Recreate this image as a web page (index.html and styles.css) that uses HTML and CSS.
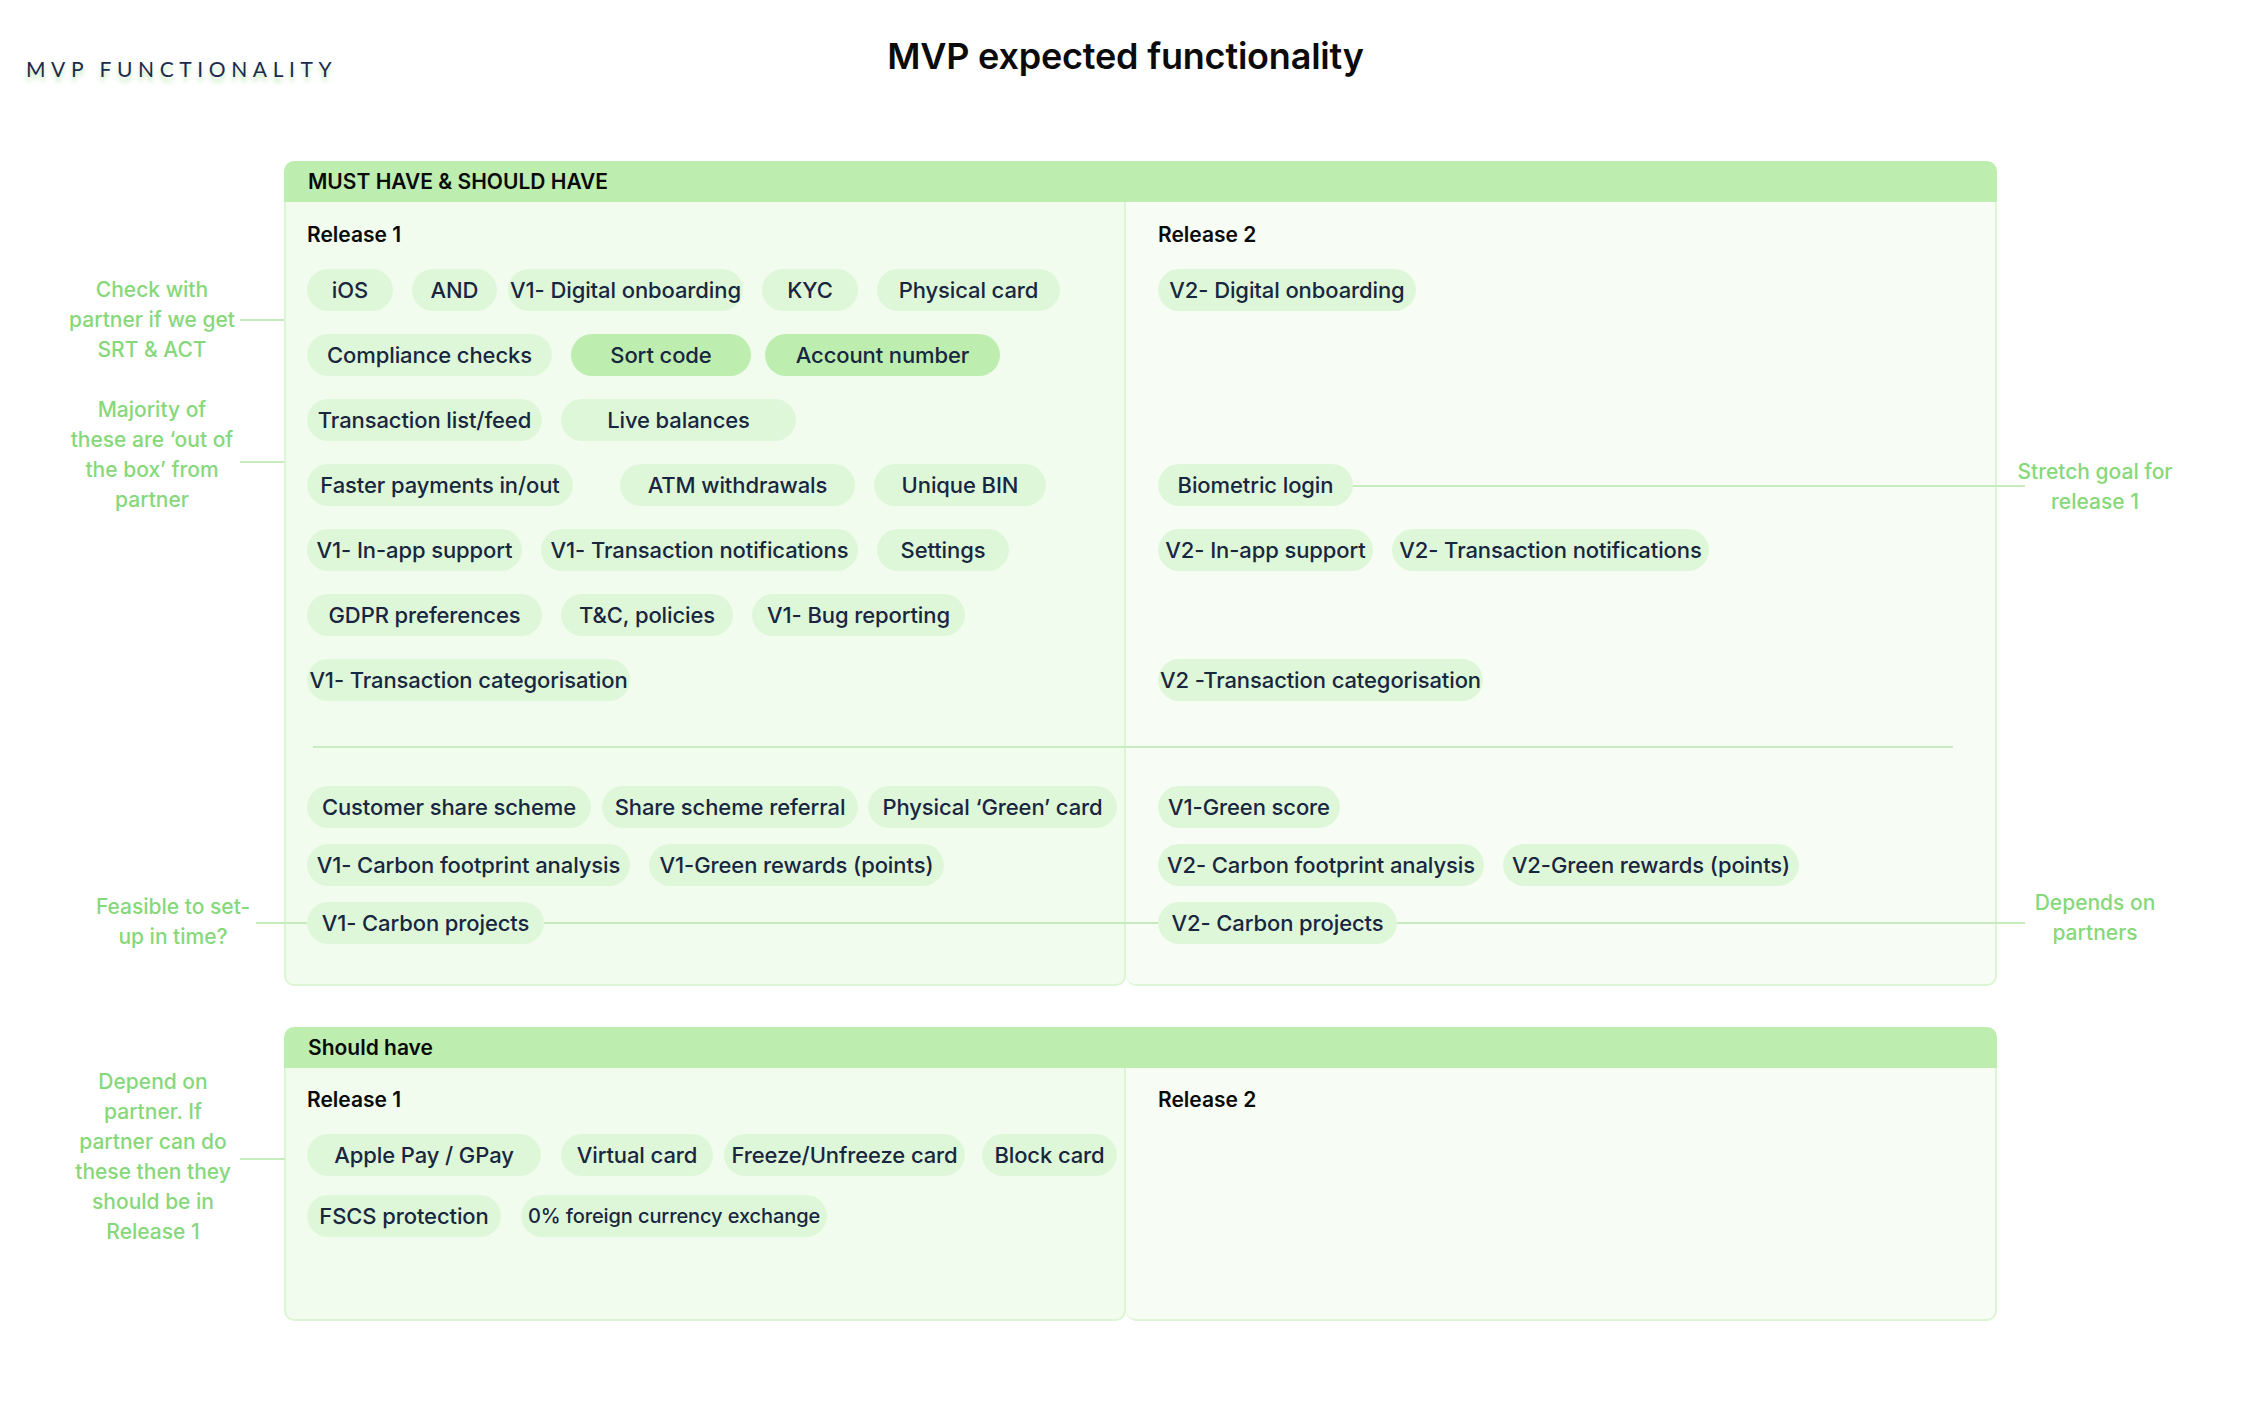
FILE: index.html
```html
<!DOCTYPE html>
<html lang="en">
<head>
<meta charset="utf-8">
<title>MVP expected functionality</title>
<link rel="stylesheet" href="styles.css">
</head>
<body>
<header class="top">
  <div class="label">MVP FUNCTIONALITY</div>
  <h1 class="title">MVP expected functionality</h1>
  <div></div>
</header>

<section class="section s1">
  <div class="box">
    <div class="box-head">MUST HAVE &amp; SHOULD HAVE</div>
    <div class="cols">
      <div class="col col-left">
        <div class="rel">Release 1</div>
        <div class="rows">
          <div class="row">
            <div class="pill" style="width:86px">iOS</div>
            <div class="pill" style="width:85px">AND</div>
            <div class="pill g11" style="width:235px">V1- Digital onboarding</div>
            <div class="pill" style="width:96px">KYC</div>
            <div class="pill" style="width:183px">Physical card</div>
          </div>
          <div class="row">
            <div class="pill" style="width:245px">Compliance checks</div>
            <div class="pill dark" style="width:180px">Sort code</div>
            <div class="pill dark g14" style="width:235px">Account number</div>
          </div>
          <div class="row">
            <div class="pill" style="width:235px">Transaction list/feed</div>
            <div class="pill" style="width:235px">Live balances</div>
          </div>
          <div class="row">
            <div class="pill" style="width:266px">Faster payments in/out</div>
            <div class="pill g47" style="width:235px">ATM withdrawals</div>
            <div class="pill" style="width:172px">Unique BIN</div>
          </div>
          <div class="row">
            <div class="pill" style="width:215px">V1- In-app support</div>
            <div class="pill" style="width:317px">V1- Transaction notifications</div>
            <div class="pill" style="width:132px">Settings</div>
          </div>
          <div class="row">
            <div class="pill" style="width:235px">GDPR preferences</div>
            <div class="pill" style="width:172px">T&amp;C, policies</div>
            <div class="pill" style="width:213px">V1- Bug reporting</div>
          </div>
          <div class="row">
            <div class="pill" style="width:323px">V1- Transaction categorisation</div>
          </div>
        </div>
        <div class="divider"></div>
        <div class="rows rows-low">
          <div class="row">
            <div class="pill" style="width:284px">Customer share scheme</div>
            <div class="pill g11" style="width:256px">Share scheme referral</div>
            <div class="pill g10" style="width:249px">Physical ‘Green’ card</div>
          </div>
          <div class="row">
            <div class="pill" style="width:323px">V1- Carbon footprint analysis</div>
            <div class="pill" style="width:295px">V1-Green rewards (points)</div>
          </div>
          <div class="row">
            <div class="pill" style="width:237px">V1- Carbon projects</div>
          </div>
        </div>
      </div>
      <div class="col col-right">
        <div class="rel">Release 2</div>
        <div class="rows">
          <div class="row">
            <div class="pill" style="width:258px">V2- Digital onboarding</div>
          </div>
          <div class="row"></div>
          <div class="row"></div>
          <div class="row">
            <div class="pill" style="width:195px">Biometric login</div>
          </div>
          <div class="row">
            <div class="pill" style="width:215px">V2- In-app support</div>
            <div class="pill" style="width:317px">V2- Transaction notifications</div>
          </div>
          <div class="row"></div>
          <div class="row">
            <div class="pill" style="width:325px">V2 -Transaction categorisation</div>
          </div>
        </div>
        <div class="divider"></div>
        <div class="rows rows-low">
          <div class="row">
            <div class="pill" style="width:182px">V1-Green score</div>
          </div>
          <div class="row">
            <div class="pill" style="width:326px">V2- Carbon footprint analysis</div>
            <div class="pill" style="width:296px">V2-Green rewards (points)</div>
          </div>
          <div class="row">
            <div class="pill" style="width:239px">V2- Carbon projects</div>
          </div>
        </div>
      </div>
    </div>
  </div>

  <div class="note n-check">Check with<br>partner if we get<br>SRT &amp; ACT</div>
  <div class="note n-majority">Majority of<br>these are ‘out of<br>the box’ from<br>partner</div>
  <div class="note n-feasible">Feasible to set-<br>up in time?</div>
  <div class="note n-stretch">Stretch goal for<br>release 1</div>
  <div class="note n-depends">Depends on<br>partners</div>

  <div class="link l-check"></div>
  <div class="link l-majority"></div>
  <div class="link l-carbon"></div>
  <div class="link l-bio"></div>
</section>

<section class="section s2">
  <div class="box">
    <div class="box-head">Should have</div>
    <div class="cols">
      <div class="col col-left col-short">
        <div class="rel">Release 1</div>
        <div class="rows rows-b2">
          <div class="row">
            <div class="pill" style="width:234px">Apple Pay / GPay</div>
            <div class="pill g20" style="width:152px">Virtual card</div>
            <div class="pill g11" style="width:241px">Freeze/Unfreeze card</div>
            <div class="pill g17" style="width:135px">Block card</div>
          </div>
          <div class="row">
            <div class="pill" style="width:194px">FSCS protection</div>
            <div class="pill small g20" style="width:306px">0% foreign currency exchange</div>
          </div>
        </div>
      </div>
      <div class="col col-right col-short">
        <div class="rel">Release 2</div>
      </div>
    </div>
  </div>

  <div class="note n-depend">Depend on<br>partner. If<br>partner can do<br>these then they<br>should be in<br>Release 1</div>
  <div class="link l-depend"></div>
</section>
</body>
</html>
```

FILE: styles.css
```css
* { box-sizing: border-box; }

html, body {
  margin: 0;
  padding: 0;
  background: #ffffff;
}

body {
  width: 2242px;
  min-height: 1402px;
  font-family: "Inter", "Noto Sans", "Liberation Sans", sans-serif;
  color: #1b2a44;
}

/* ---------- top header ---------- */
.top {
  display: grid;
  grid-template-columns: 1fr auto 1fr;
  align-items: start;
  height: 81px;
  padding-top: 36px;
}

.label {
  margin-top: 20px;
  padding-left: 26px;
  font-family: "Lato", "Liberation Sans", sans-serif;
  font-size: 21px;
  line-height: 25px;
  font-weight: 400;
  letter-spacing: 5.6px;
  color: #1b2b4c;
  text-shadow: 0 5px 4px rgba(134, 216, 122, 0.5);
  white-space: nowrap;
}

.title {
  margin: 0;
  padding-left: 9px;
  font-size: 36px;
  line-height: 40px;
  font-weight: 600;
  color: #0b0b0b;
  letter-spacing: -0.2px;
}

/* ---------- sections ---------- */
.section {
  position: relative;
  padding-left: 284px;
}

.s1 { margin-top: 80px; }
.s2 { margin-top: 41px; }

.box {
  width: 1713px;
}

.box-head {
  height: 41px;
  line-height: 41px;
  padding-left: 24px;
  background: #bdeeb0;
  border-radius: 10px 10px 0 0;
  font-size: 21px;
  font-weight: 600;
  color: #0a0a0a;
}

.cols {
  display: grid;
  grid-template-columns: 842px 871px;
}

.col {
  border: 2px solid #dcf5d4;
  border-top: 0;
  border-radius: 0 0 10px 10px;
  padding-top: 20px;
  padding-bottom: 40px;
}

.col-left {
  background: #f1fcee;
  padding-left: 21px;
}

.col-right {
  background: #f7fdf5;
  border-left: 0;
  padding-left: 32px;
}

.col-short {
  padding-top: 19px;
  padding-bottom: 82px;
}

.rel {
  font-size: 21px;
  line-height: 25px;
  font-weight: 600;
  color: #0a0a0a;
}

.rows {
  display: flex;
  flex-direction: column;
  gap: 23px;
  margin-top: 22px;
}

.rows-low {
  gap: 16px;
  margin-top: 38px;
}

.rows-b2 {
  gap: 19px;
}

.row {
  display: flex;
  height: 42px;
}

.pill {
  position: relative;
  z-index: 1;
  flex: none;
  display: flex;
  align-items: center;
  justify-content: center;
  height: 42px;
  border-radius: 21px;
  background: #dff7d9;
  font-size: 22px;
  font-weight: 500;
  color: #18263f;
  white-space: nowrap;
  letter-spacing: -0.1px;
}

.pill + .pill { margin-left: 19px; }
.pill.g10 { margin-left: 10px; }
.pill.g11 { margin-left: 11px; }
.pill.g14 { margin-left: 14px; }
.pill.g17 { margin-left: 17px; }
.pill.g20 { margin-left: 20px; }
.pill.g47 { margin-left: 47px; }

.pill.dark { background: #bdeeb0; }
.pill.small { font-size: 20px; }

.divider {
  height: 2px;
  margin-top: 45px;
  background: #c8edc0;
}

.col-left .divider { margin-left: 6px; margin-right: -2px; }
.col-right .divider { margin-left: -32px; margin-right: 42px; }

/* ---------- annotations ---------- */
.note {
  position: absolute;
  width: 220px;
  text-align: center;
  font-size: 21px;
  line-height: 30px;
  font-weight: 500;
  color: #86d87a;
}

.n-check    { top: 114px; left: 42px; }
.n-majority { top: 234px; left: 42px; }
.n-feasible { top: 731px; left: 63px; }
.n-stretch  { top: 296px; left: 1985px; }
.n-depends  { top: 727px; left: 1985px; }
.n-depend   { top: 40px;  left: 43px; }

.link {
  position: absolute;
  height: 2px;
  background: #c6ecbd;
}

.l-check    { top: 158px; left: 240px; width: 44px; }
.l-majority { top: 300px; left: 240px; width: 44px; }
.l-carbon   { top: 761px; left: 256px; width: 1769px; }
.l-bio      { top: 324px; left: 1300px; width: 725px; }
.l-depend   { top: 131px; left: 240px; width: 45px; }
```
